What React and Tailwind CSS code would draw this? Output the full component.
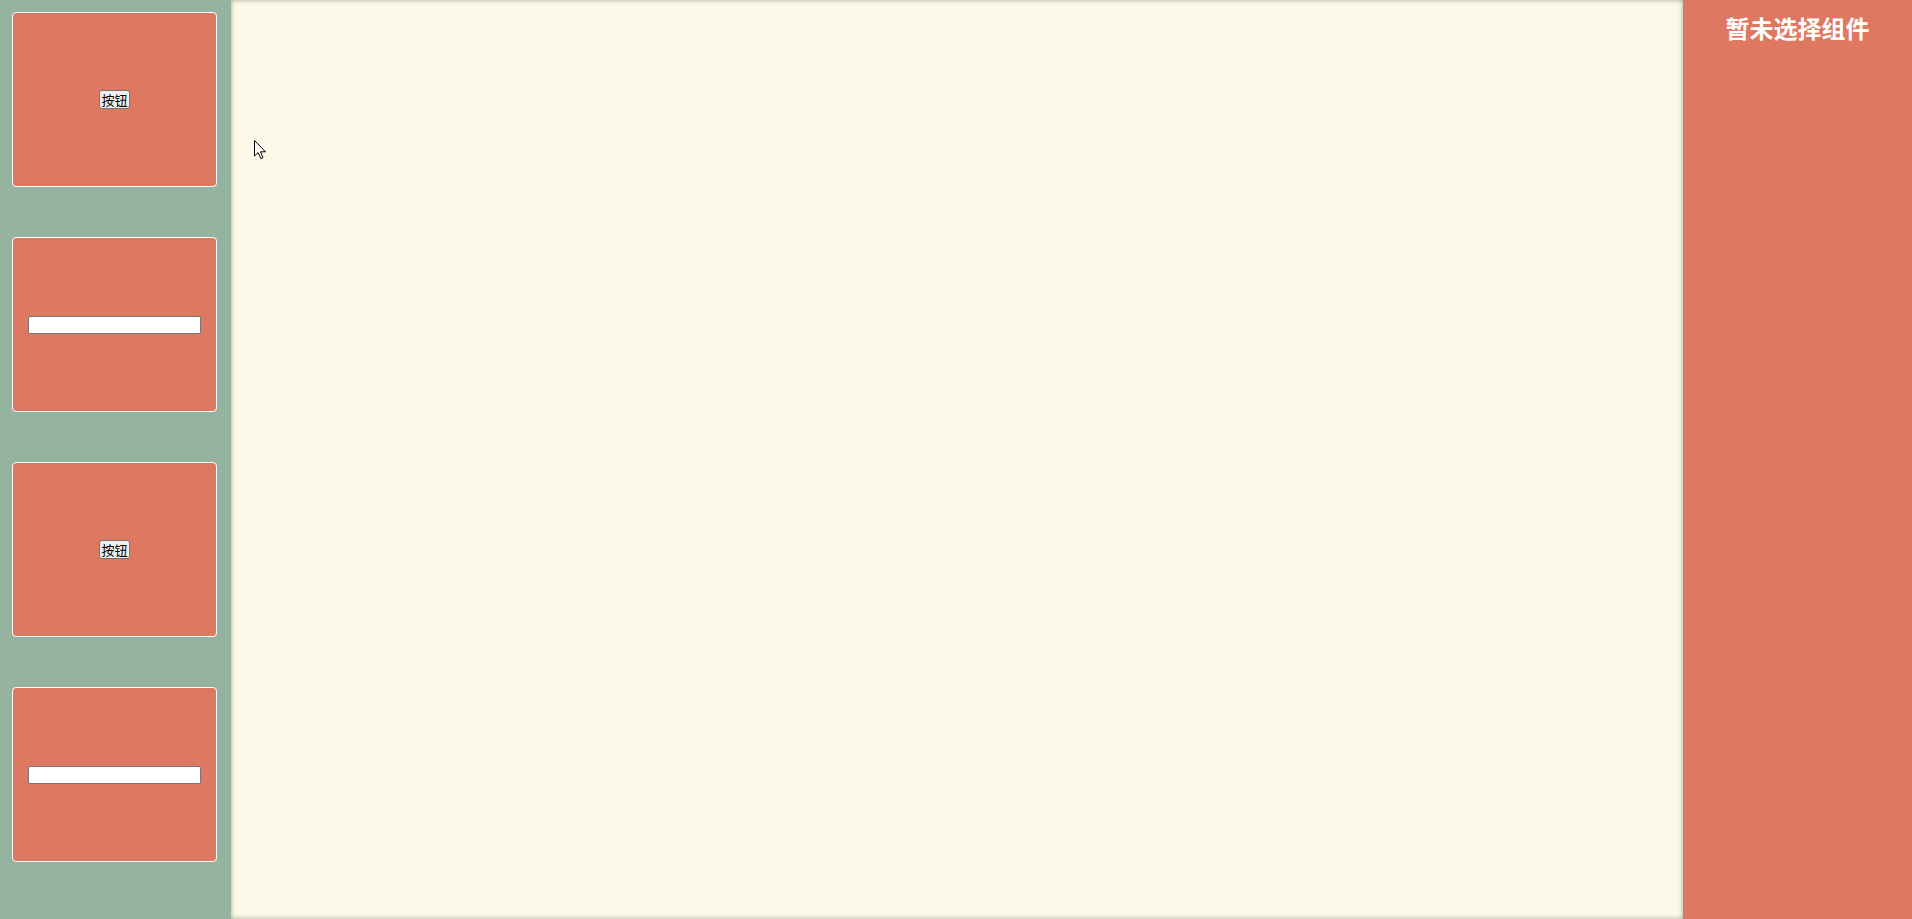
import React from "react";

function BtnCard() {
  return (
    <div className="h-[175px] w-[205px] ml-[12px] rounded-[4px] border border-white bg-[#df7861] flex items-center justify-center">
      <button className="bg-[#efefef] border border-[#767676] rounded-[3px] text-[13px] leading-[17px] px-px text-black font-['Noto_Sans_CJK_SC',sans-serif]">
        按钮
      </button>
    </div>
  );
}

function InputCard() {
  return (
    <div className="h-[175px] w-[205px] ml-[12px] rounded-[4px] border border-white bg-[#df7861] flex items-center justify-center">
      <input className="w-[173px] h-[18px] bg-white border border-[#767676] rounded-[2px] text-[13px]" />
    </div>
  );
}

export default function App() {
  return (
    <div className="flex h-[919px] w-[1912px] overflow-hidden font-['Noto_Sans_CJK_SC',sans-serif]">
      <div className="w-[231px] shrink-0 bg-[#96b3a0] flex flex-col pt-[12px] gap-[50px]">
        <BtnCard />
        <InputCard />
        <BtnCard />
        <InputCard />
      </div>
      <div className="relative flex-1 bg-[#fcf9e8] shadow-[inset_0_0_5px_rgba(0,0,0,0.35)]">
        <svg
          className="absolute left-[23px] top-[140px]"
          width="13"
          height="20"
          viewBox="0 0 13 20"
        >
          <path
            d="M0.5 0.5 L0.5 16 L4.2 12.6 L6.8 18.6 L9 17.6 L6.5 11.8 L11.5 11.8 Z"
            fill="white"
            stroke="black"
            strokeWidth="1"
            strokeLinejoin="miter"
          />
        </svg>
      </div>
      <div className="w-[229px] shrink-0 bg-[#df7861] flex justify-center">
        <h2 className="pt-[10px] text-[24px] leading-[36px] font-bold text-white font-['Noto_Sans_CJK_SC',sans-serif]">
          暂未选择组件
        </h2>
      </div>
    </div>
  );
}
